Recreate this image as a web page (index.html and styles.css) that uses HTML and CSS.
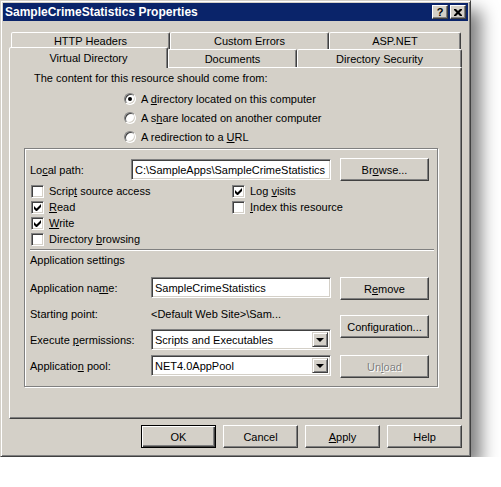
FILE: index.html
```html
<!DOCTYPE html>
<html>
  <head>
    <title>SampleCrimeStatistics Properties</title>
    <meta charset="utf-8" />
    <link rel="stylesheet" href="styles.css">
  </head>
  <body>
    <div class="window">
      <div class="titlebar">
        <span class="title">SampleCrimeStatistics Properties</span>
        <div class="caption">
          <span class="cap cap-help">?</span>
          <span class="cap">
            <svg width="8" height="7" viewBox="0 0 8 7"><path d="M0 0h2l2 2 2-2h2v1l-2.5 2.5 2.5 2.5v1h-2l-2-2-2 2h-2v-1l2.5-2.5-2.5-2.5z" fill="#000"/></svg>
          </span>
        </div>
      </div>

      <div class="client">
        <div class="tabs">
          <div class="tab-row back">
            <div class="tab w159">HTTP Headers</div>
            <div class="tab w159">Custom Errors</div>
            <div class="tab w132">ASP.NET</div>
          </div>
          <div class="tab-row front">
            <div class="tab selected w159">Virtual Directory</div>
            <div class="tab w129">Documents</div>
            <div class="tab w165">Directory Security</div>
          </div>
        </div>

        <div class="panel">
          <div class="intro">The content for this resource should come from:</div>
          <div class="radios">
            <label class="radio"><span class="dot checked"></span><span>A <u>d</u>irectory located on this computer</span></label>
            <label class="radio"><span class="dot"></span><span>A s<u>h</u>are located on another computer</span></label>
            <label class="radio"><span class="dot"></span><span>A redirection to a <u>U</u>RL</span></label>
          </div>

          <div class="group">
            <div class="path-row">
              <span class="path-label">Lo<u>c</u>al path:</span>
              <div class="field path-field">C:\SampleApps\SampleCrimeStatistics</div>
              <span class="btn"><span>Br<u>o</u>wse...</span></span>
            </div>

            <div class="checks">
              <div class="check-col left">
                <label class="check"><span class="box"></span><span>Scrip<u>t</u> source access</span></label>
                <label class="check"><span class="box on"></span><span><u>R</u>ead</span></label>
                <label class="check"><span class="box on"></span><span><u>W</u>rite</span></label>
                <label class="check"><span class="box"></span><span>Directory <u>b</u>rowsing</span></label>
              </div>
              <div class="check-col">
                <label class="check"><span class="box on"></span><span>Log <u>v</u>isits</span></label>
                <label class="check"><span class="box"></span><span><u>I</u>ndex this resource</span></label>
              </div>
            </div>

            <div class="divider"></div>
            <div class="section">Application settings</div>

            <div class="app">
              <div class="app-grid">
                <span class="app-label">Application na<u>m</u>e:</span>
                <div class="field">SampleCrimeStatistics</div>

                <span class="app-label">Starting point:</span>
                <span class="app-value">&lt;Default Web Site&gt;\Sam...</span>

                <span class="app-label">Execute <u>p</u>ermissions:</span>
                <div class="field select">
                  <span>Scripts and Executables</span>
                  <span class="drop"><span class="arrow"></span></span>
                </div>

                <span class="app-label">Applicatio<u>n</u> pool:</span>
                <div class="field select">
                  <span>NET4.0AppPool</span>
                  <span class="drop"><span class="arrow"></span></span>
                </div>
              </div>

              <div class="app-buttons">
                <span class="btn"><span>R<u>e</u>move</span></span>
                <span class="btn config"><span>Configuration...</span></span>
                <span class="btn disabled unload"><span>Un<u>l</u>oad</span></span>
              </div>
            </div>
          </div>
        </div>

        <div class="actions">
          <span class="btn wide default">OK</span>
          <span class="btn wide">Cancel</span>
          <span class="btn wide"><span><u>A</u>pply</span></span>
          <span class="btn wide">Help</span>
        </div>
      </div>
    </div>
  </body>
</html>
```

FILE: styles.css
```css
* {
  box-sizing: border-box;
}
body {
  margin: 0;
  background: #fff;
  font: 11px "Liberation Sans", Arial, sans-serif;
  color: #000;
}
u {
  text-decoration-thickness: 1px;
  text-underline-offset: 1px;
}

/* classic 3d window frame */
.window {
  width: 471px;
  height: 457px;
  padding: 2px;
  background: #d4d0c8;
  border: 1px solid;
  border-color: #d4d0c8 #404040 #404040 #d4d0c8;
  box-shadow: inset 1px 1px #fff, inset -1px -1px #808080, 10px 10px 16px rgba(0, 0, 0, 0.5);
  display: flex;
  flex-direction: column;
}
.titlebar {
  height: 18px;
  padding: 0 2px 0 2px;
  background: #0a246a;
  color: #fff;
  display: flex;
  align-items: center;
  justify-content: space-between;
}
.title {
  font-weight: bold;
  font-size: 12px;
}
.caption {
  display: flex;
  gap: 2px;
}
.cap {
  width: 16px;
  height: 14px;
  background: #d4d0c8;
  border: 1px solid;
  border-color: #fff #404040 #404040 #fff;
  box-shadow: inset -1px -1px #808080;
  display: flex;
  align-items: center;
  justify-content: center;
  color: #000;
}
.cap-help {
  font-weight: bold;
  font-size: 11px;
  line-height: 1;
}

.client {
  flex: 1;
  padding: 0 6px;
  display: flex;
  flex-direction: column;
}

/* tab strip, two rows */
.tabs {
  margin-top: 11px;
}
.tab-row {
  display: flex;
}
.tab-row.back {
  height: 15px;
  padding-left: 2px;
}
.tab-row.front {
  height: 20px;
  align-items: flex-end;
}
.tab {
  background: #d4d0c8;
  border: 1px solid;
  border-bottom: 0;
  border-color: #fff #404040 transparent #fff;
  border-radius: 2px 2px 0 0;
  box-shadow: inset -1px 0 #808080;
  display: flex;
  align-items: center;
  justify-content: center;
  flex: none;
}
.back .tab {
  height: 17px;
  align-self: flex-start;
}
.front .tab {
  height: 18px;
}
.tab.selected {
  height: 21px;
  margin-bottom: -1px;
  position: relative;
  z-index: 1;
}
.w159 { width: 159px; }
.w132 { width: 132px; }
.w129 { width: 129px; }
.w165 { width: 165px; }

.panel {
  height: 352px;
  padding: 4px 0 0 14px;
  border: 1px solid;
  border-color: #fff #404040 #404040 #fff;
  box-shadow: inset -1px -1px #808080;
}
.intro {
  margin-left: 10px;
  line-height: 13px;
}
.radios {
  margin: 7px 0 0 100px;
  display: flex;
  flex-direction: column;
  gap: 6px;
}
.radio {
  height: 13px;
  display: flex;
  align-items: center;
  gap: 5px;
}
.dot {
  width: 12px;
  height: 12px;
  border-radius: 50%;
  border: 1px solid;
  border-color: #808080 #fff #fff #808080;
  box-shadow: inset 1px 1px #404040, inset -1px -1px #d4d0c8;
  background: #fff;
  display: flex;
  align-items: center;
  justify-content: center;
}
.dot.checked::after {
  content: "";
  width: 4px;
  height: 4px;
  border-radius: 50%;
  background: #000;
}

/* etched group box */
.group {
  width: 414px;
  height: 239px;
  margin-top: 5px;
  padding: 9px 0 0 5px;
  border: 1px solid #808080;
  box-shadow: inset 1px 1px #fff, 1px 1px #fff;
}
.path-row {
  height: 23px;
  display: flex;
  align-items: center;
}
.path-label {
  width: 101px;
}
.path-field {
  width: 200px;
}
.path-row .btn {
  margin-left: 9px;
}

.field {
  height: 21px;
  padding: 0 3px;
  background: #fff;
  border: 1px solid;
  border-color: #808080 #fff #fff #808080;
  box-shadow: inset 1px 1px #404040, inset -1px -1px #d4d0c8;
  display: flex;
  align-items: center;
  white-space: nowrap;
  overflow: hidden;
}
.select {
  justify-content: space-between;
  padding-right: 2px;
}
.drop {
  width: 16px;
  height: 15px;
  background: #d4d0c8;
  border: 1px solid;
  border-color: #d4d0c8 #404040 #404040 #d4d0c8;
  box-shadow: inset 1px 1px #fff, inset -1px -1px #808080;
  display: flex;
  align-items: center;
  justify-content: center;
}
.arrow {
  width: 0;
  height: 0;
  border-left: 4px solid transparent;
  border-right: 4px solid transparent;
  border-top: 4px solid #000;
}

.btn {
  width: 89px;
  height: 23px;
  background: #d4d0c8;
  border: 1px solid;
  border-color: #fff #404040 #404040 #fff;
  box-shadow: inset -1px -1px #808080;
  display: flex;
  align-items: center;
  justify-content: center;
  flex: none;
}
.btn.wide {
  width: 75px;
}
.btn.default {
  border: 1px solid #000;
  box-shadow: inset 1px 1px #fff, inset -1px -1px #404040, inset -2px -2px #808080;
}
.btn.disabled {
  color: #808080;
  text-shadow: 1px 1px #fff;
}

.checks {
  margin: 2px 0 0 1px;
  display: flex;
}
.check-col {
  display: flex;
  flex-direction: column;
}
.check-col.left {
  width: 201px;
}
.check {
  height: 16px;
  display: flex;
  align-items: center;
  gap: 5px;
}
.box {
  width: 13px;
  height: 13px;
  background: #fff;
  border: 1px solid;
  border-color: #808080 #fff #fff #808080;
  box-shadow: inset 1px 1px #404040, inset -1px -1px #d4d0c8;
  display: flex;
  align-items: center;
  justify-content: center;
}
.box.on::after {
  content: "";
  width: 7px;
  height: 7px;
  background: no-repeat center / 7px 7px
    url("data:image/svg+xml,%3Csvg xmlns='http://www.w3.org/2000/svg' width='7' height='7'%3E%3Cpath d='M0 2v3l2 2h1l4-4V0L2.5 4.5z' fill='%23000'/%3E%3C/svg%3E");
}

.divider {
  width: 404px;
  height: 2px;
  margin-top: 2px;
  border-top: 1px solid #808080;
  border-bottom: 1px solid #fff;
}
.section {
  margin-top: 3px;
  line-height: 13px;
}

.app {
  margin-top: 10px;
  display: flex;
}
.app-grid {
  display: grid;
  grid-template-columns: 121px 180px;
  grid-auto-rows: 21px;
  row-gap: 5px;
  align-items: center;
}
.app-buttons {
  margin-left: 9px;
  display: flex;
  flex-direction: column;
}
.config {
  margin-top: 15px;
}
.unload {
  margin-top: 17px;
}

.actions {
  margin-top: 6px;
  display: flex;
  justify-content: flex-end;
  gap: 7px;
}
```
